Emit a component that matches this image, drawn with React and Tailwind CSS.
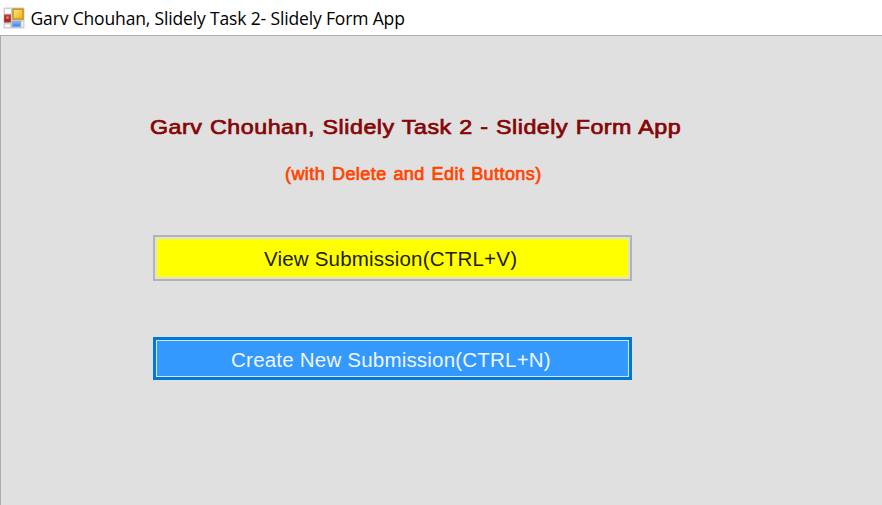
function FormIcon() {
  return (
    <svg width="22" height="22" viewBox="0 0 22 22" className="shrink-0">
      <defs>
        <linearGradient id="gold" x1="0" y1="0" x2="1" y2="1">
          <stop offset="0" stopColor="#ffe58a" />
          <stop offset="1" stopColor="#f0b010" />
        </linearGradient>
        <linearGradient id="blue" x1="0" y1="0" x2="0" y2="1">
          <stop offset="0" stopColor="#8fbcff" />
          <stop offset="1" stopColor="#3f78dc" />
        </linearGradient>
        <linearGradient id="red" x1="0" y1="0" x2="0" y2="1">
          <stop offset="0" stopColor="#c8402e" />
          <stop offset="1" stopColor="#a81c18" />
        </linearGradient>
      </defs>
      <rect x="0.5" y="0.5" width="21" height="21" fill="#cecece" />
      <rect x="2" y="2" width="6" height="4.5" fill="#fff" />
      <rect x="2" y="17.5" width="5" height="2.5" fill="#fff" />
      <rect x="18.7" y="14.5" width="1.5" height="5.5" fill="#f4f4f4" />
      <rect x="10" y="2.2" width="10" height="9.8" fill="url(#gold)" stroke="#c6981c" strokeWidth="1.6" />
      <rect x="1.5" y="8" width="6" height="7" fill="url(#red)" stroke="#b8443a" />
      <rect x="3.4" y="9.4" width="2.2" height="2.4" fill="#e08878" />
      <rect x="9.3" y="14.3" width="8" height="5.4" fill="url(#blue)" stroke="#88a8e0" />
    </svg>
  );
}

export default function App() {
  return (
    <div className="flex h-[505px] w-[882px] flex-col overflow-hidden bg-white">
      <header className="flex h-[35px] shrink-0 items-center pl-[3px]">
        <FormIcon />
        <h1 className="ml-[5.5px] whitespace-nowrap font-['Open_Sans','Noto_Sans',sans-serif] text-[17.5px] leading-6 tracking-[-0.15px] text-black">
          Garv Chouhan, Slidely Task 2- Slidely Form App
        </h1>
      </header>
      <main className="flex flex-1 flex-col border-l border-t border-[#adadad] bg-[#e0e0e0] font-['Liberation_Sans',Arial,sans-serif]">
        <h2 className="ml-[149px] mt-[77px] origin-left scale-x-[1.135] self-start whitespace-nowrap text-[20.5px] leading-[28px] tracking-[0.45px] [word-spacing:0.5px] text-[#850505] [-webkit-text-stroke:0.7px_#850505]">
          Garv Chouhan, Slidely Task 2 - Slidely Form App
        </h2>
        <p className="ml-[284px] mt-[21px] self-start whitespace-nowrap text-[18px] leading-[24px] tracking-[0.43px] [word-spacing:1.4px] text-[#ff4500] [-webkit-text-stroke:0.7px_#ff4500]">
          (with Delete and Edit Buttons)
        </p>
        <button className="ml-[152px] mt-[49px] h-[46px] w-[478.5px] border-2 border-[#b3b3b3] p-[2px]">
          <span className="flex h-full items-center justify-center bg-[#ffff00] pr-[4px] pt-[2px] text-[20px] text-[#202000]">
            <span className="scale-x-[1.025] whitespace-nowrap tracking-[0.2px]">View Submission(CTRL+V)</span>
          </span>
        </button>
        <button className="ml-[152px] mt-[56px] h-[43px] w-[478.5px] border-[3px] border-[#0078d7]">
          <span className="flex h-full items-center justify-center border border-[#d5e5f5] bg-[#3399ff] pr-[2px] pt-[2px] text-[20px] text-[#f0f6ff]">
            <span className="scale-x-[1.025] whitespace-nowrap tracking-[0.2px]">Create New Submission(CTRL+N)</span>
          </span>
        </button>
      </main>
    </div>
  );
}
